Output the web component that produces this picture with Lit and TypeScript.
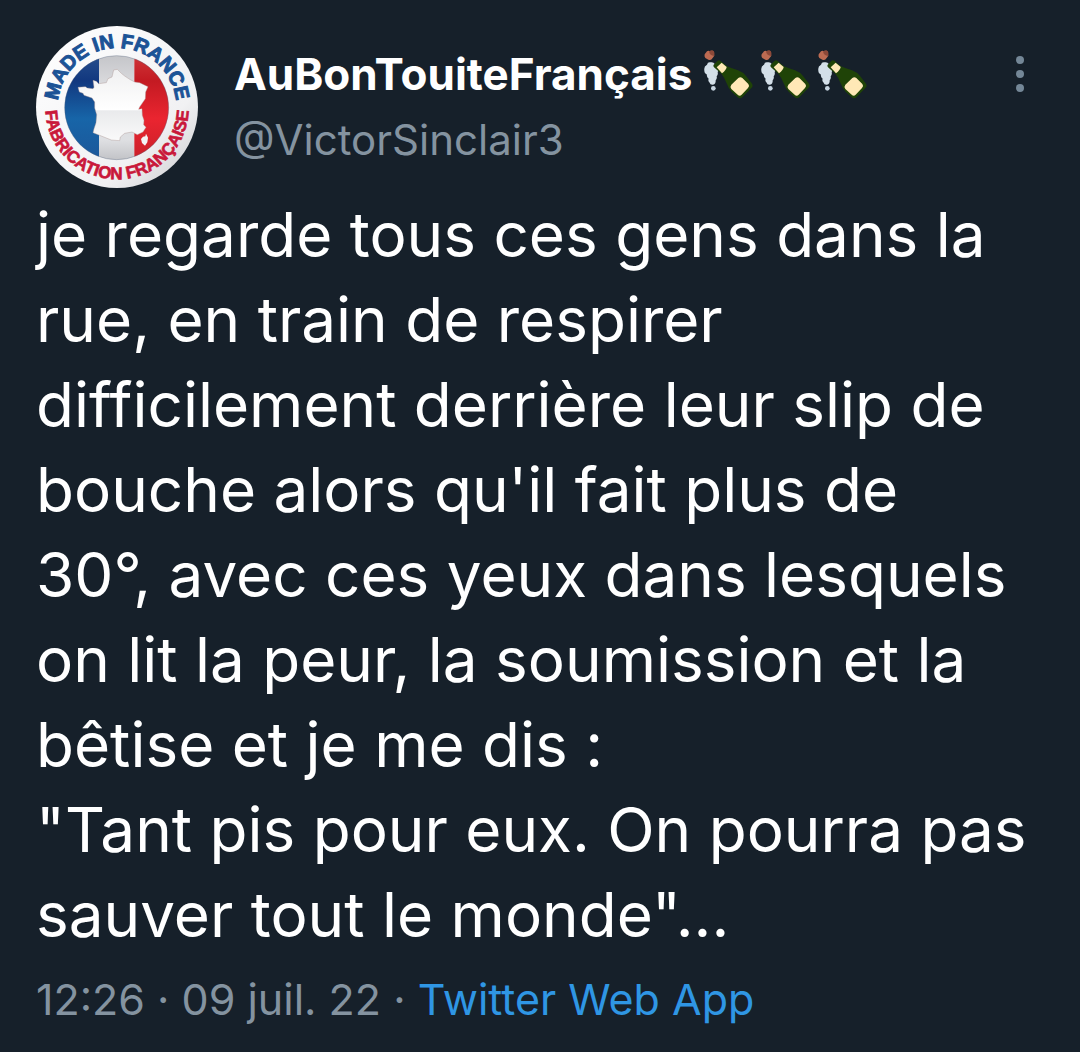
import { LitElement, html, css, svg } from "lit";
import { customElement } from "lit/decorators.js";

@customElement("made-in-france-badge")
class MadeInFranceBadge extends LitElement {
  static styles = css`
    :host { display: block; width: 162px; height: 162px; flex: none; }
    .badge { display: block; width: 100%; height: 100%; }
    .ring { font-family: "Liberation Sans", Arial, sans-serif; font-weight: 700; text-anchor: middle; }
    .top { font-size: 60px; fill: #1c5396; stroke: #1c5396; stroke-width: 3px; }
    .bottom { font-size: 51px; fill: #c9183a; stroke: #c9183a; stroke-width: 2px; }
  `;

  render() {
    return html`<svg class="badge" viewBox="19 17 486 486" role="img" aria-label="Made in France">
      <defs>
        <linearGradient id="rim" x1="0" y1="0" x2="1" y2="1">
          <stop offset="0" stop-color="#ffffff" />
          <stop offset="0.7" stop-color="#f1f1f3" />
          <stop offset="1" stop-color="#c9cacd" />
        </linearGradient>
        <linearGradient id="blue" x1="0" y1="0" x2="0" y2="1">
          <stop offset="0" stop-color="#27508f" />
          <stop offset="0.25" stop-color="#12387f" />
          <stop offset="0.6" stop-color="#1765a8" />
          <stop offset="1" stop-color="#1c5699" />
        </linearGradient>
        <linearGradient id="white" x1="0" y1="0" x2="0" y2="1">
          <stop offset="0" stop-color="#c3c4c8" />
          <stop offset="0.3" stop-color="#dcdcdf" />
          <stop offset="0.8" stop-color="#dedfe2" />
          <stop offset="1" stop-color="#bfc0c4" />
        </linearGradient>
        <linearGradient id="red" x1="0" y1="0" x2="0" y2="1">
          <stop offset="0" stop-color="#d0373a" />
          <stop offset="0.25" stop-color="#c31a22" />
          <stop offset="0.6" stop-color="#ea2530" />
          <stop offset="1" stop-color="#c81f29" />
        </linearGradient>
        <linearGradient id="land" x1="0" y1="0" x2="0" y2="1">
          <stop offset="0" stop-color="#f0f0f1" />
          <stop offset="0.57" stop-color="#ffffff" />
          <stop offset="0.58" stop-color="#e9eaec" />
          <stop offset="1" stop-color="#fafafa" />
        </linearGradient>
        <clipPath id="disc"><circle cx="261" cy="262" r="156" /></clipPath>
        <path id="topArc" d="M84 261A178 178 0 0 1 440 261" />
        <path id="bottomArc" d="M47 262A215 215 0 0 0 477 262" />
      </defs>
      <circle cx="262" cy="260" r="243" fill="url(#rim)" />
      <g clip-path="url(#disc)">
        <rect x="100" y="100" width="108" height="325" fill="url(#blue)" />
        <rect x="208" y="100" width="106" height="325" fill="url(#white)" />
        <rect x="314" y="100" width="110" height="325" fill="url(#red)" />
      </g>
      <circle cx="261" cy="262" r="156" fill="none" stroke="#53607c" stroke-opacity=".35" stroke-width="3" />
      <path fill="url(#land)" stroke="#a9938f" stroke-opacity=".6" stroke-width="2" stroke-linejoin="round"
        d="M145 201L167 199L173 203L190 205L193 201L190 180L200 183L207 190L230 187L235 175L247 170L252 149L263 147L275 159L285 167L300 177L315 185L330 187L355 199L348 215L347 235L330 260L327 267L337 265L338 285L343 300L342 313L349 321L340 335L323 343L307 335L285 339L272 350L270 361L245 359L215 347L190 337L193 325L199 307L201 283L195 263L195 245L187 233L163 225L160 219L149 215Z" />
      <path fill="#f3f3f4" d="M349 340L355 352L353 366L346 376L337 368L334 356L340 349L347 348Z" />
      <text class="ring top"><textPath href="#topArc" startOffset="50%">MADE IN FRANCE</textPath></text>
      <text class="ring bottom"><textPath href="#bottomArc" startOffset="50%">FABRICATION FRANÇAISE</textPath></text>
    </svg>`;
  }
}

const bottle = () => svg`<svg class="bottle" viewBox="36 28 147 147" aria-hidden="true">
  <path fill="#bd6b52" d="M38 41L45 32Q50 28 54 32L58 31Q64 29 66 35L67 45L59 56Q55 60 49 57L40 52Q36 47 38 41Z" />
  <path fill="#8d4939" d="M51 33Q55 27 61 29Q68 32 67 38L66 46Q54 44 51 33Z" />
  <path fill="#d3dfe8" d="M45 72Q47 63 56 65Q64 63 69 71L77 78Q82 88 77 94Q79 102 74 107Q76 114 71 119Q72 130 63 132Q54 133 53 126Q47 122 50 114Q43 109 45 102Q36 99 37 89Q35 77 45 72Z" />
  <circle cx="64" cy="143" r="7" fill="#c7d5e1" />
  <path fill="#1f4307" d="M65 72L77 60Q81 57 85 60L105 77Q118 83 138 89Q152 94 162 106L179 128Q185 136 178 142L151 170Q144 176 137 170L119 153Q109 143 105 130Q98 111 88 99L66 80Q63 76 65 72Z" />
  <path fill="#ffe8b6" d="M74 80L89 66L104 79Q103 88 90 98Z" />
  <path fill="#ffe8b6" d="M118 132L139 112Q145 107 151 112L169 130Q174 136 168 142L149 162Q143 168 137 162L118 145Q113 138 118 132Z" />
</svg>`;

const message = `je regarde tous ces gens dans la
rue, en train de respirer
difficilement derrière leur slip de
bouche alors qu'il fait plus de
30°, avec ces yeux dans lesquels
on lit la peur, la soumission et la
bêtise et je me dis :
"Tant pis pour eux. On pourra pas
sauver tout le monde"...`;

@customElement("app-root")
class AppRoot extends LitElement {
  static styles = css`
    :host {
      display: block;
      min-height: 100vh;
      box-sizing: border-box;
      padding: 26px 36px 22px;
      background: #16202a;
      color: #fff;
      font-family: Inter, "Open Sans", sans-serif;
    }
    .header { display: flex; align-items: flex-start; gap: 36px; }
    .author { flex: 1; min-width: 0; padding-top: 15px; }
    .name { display: flex; align-items: center; gap: 12px; margin: 0; font-size: 44px; line-height: 66px; font-weight: 700; }
    .bottles { display: flex; gap: 8px; }
    .bottle { display: block; width: 49px; height: 49px; }
    .handle { display: block; color: #8493a0; font-size: 42px; line-height: 66px; text-decoration: none; }
    .more { display: block; margin-top: 26px; padding: 0; width: 48px; height: 44px; border: 0; background: none; }
    .dots { display: block; margin: auto; width: 10px; height: 44px; fill: #748797; }
    .message { margin: 4px 0 0; font-size: 62px; line-height: 85px; white-space: pre-line; }
    .meta { margin: 12px 0 0; color: #8493a0; font-size: 43px; line-height: 60px; }
    .source { color: #2f96e4; text-decoration: none; }
  `;

  render() {
    return html`<article>
      <header class="header">
        <made-in-france-badge></made-in-france-badge>
        <div class="author">
          <h1 class="name"><span>AuBonTouiteFrançais</span><span class="bottles">${[0, 1, 2].map(bottle)}</span></h1>
          <a class="handle" href="#profile">@VictorSinclair3</a>
        </div>
        <button class="more" aria-label="Plus">
          <svg class="dots" viewBox="0 0 10 44"><circle cx="5" cy="8" r="4" /><circle cx="5" cy="22" r="4" /><circle cx="5" cy="36" r="4" /></svg>
        </button>
      </header>
      <p class="message">${message}</p>
      <p class="meta"><time datetime="2022-07-09T12:26">12:26 · 09 juil. 22</time> · <a class="source" href="#source">Twitter Web App</a></p>
    </article>`;
  }
}
